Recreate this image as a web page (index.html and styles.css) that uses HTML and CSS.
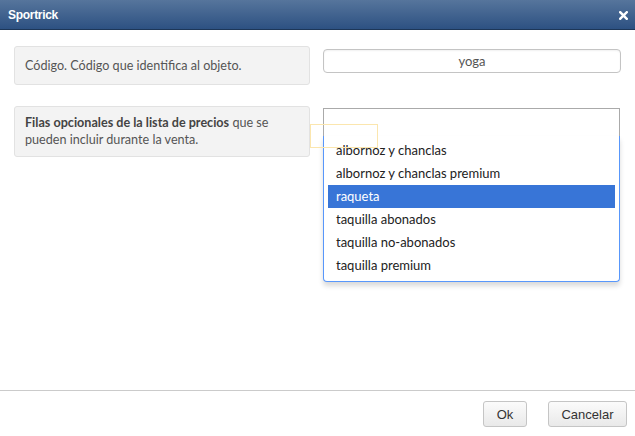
FILE: index.html
```html
<!DOCTYPE html>
<html lang="es">
<head>
<meta charset="utf-8">
<title>Sportrick</title>
<link rel="stylesheet" href="styles.css">
</head>
<body>
<div class="dialog">
  <header class="titlebar">
    <span class="title">Sportrick</span>
    <span class="close" aria-label="cerrar">
      <svg width="9" height="9" viewBox="0 0 9 9"><path d="M1.2 1.2 L7.8 7.8 M7.8 1.2 L1.2 7.8" stroke="#fff" stroke-width="2.4" stroke-linecap="square"/></svg>
    </span>
  </header>
  <main class="content">
    <div class="row">
      <div class="label">Código. Código que identifica al objeto.</div>
      <div class="field">
        <input class="text-input" type="text" value="yoga">
      </div>
    </div>
    <div class="row">
      <div class="label label-tall"><b>Filas opcionales de la lista de precios</b> que se pueden incluir durante la venta.</div>
      <div class="field field-chosen">
        <div class="chosen">
          <div class="choices"></div>
          <div class="search-box"></div>
          <div class="drop">
            <ul class="results">
              <li>albornoz y chanclas</li>
              <li>albornoz y chanclas premium</li>
              <li class="highlighted">raqueta</li>
              <li>taquilla abonados</li>
              <li>taquilla no-abonados</li>
              <li>taquilla premium</li>
            </ul>
          </div>
        </div>
      </div>
    </div>
  </main>
  <footer class="buttons">
    <button class="btn btn-ok">Ok</button>
    <button class="btn btn-cancel">Cancelar</button>
  </footer>
</div>
</body>
</html>
```

FILE: styles.css
```css
* { box-sizing: border-box; }
html, body { margin: 0; padding: 0; background: #fff; }
body { width: 635px; height: 436px; overflow: hidden; }

.dialog {
  display: flex;
  flex-direction: column;
  height: 436px;
  font-family: Lato, "Open Sans", sans-serif;
}

.titlebar {
  height: 30px;
  display: flex;
  align-items: center;
  justify-content: space-between;
  padding: 0 7px 0 8px;
  background: linear-gradient(#56759c, #2d5182);
  border-bottom: 1px solid #1d3657;
  color: #fff;
}
.title {
  font-family: "Liberation Sans", Arial, sans-serif;
  font-weight: bold;
  font-size: 12px;
  letter-spacing: -0.3px;
}
.close { display: flex; width: 9px; height: 9px; margin-top: 1px; }

.content {
  flex: 1;
  padding: 16px 14px 0 14px;
  display: flex;
  flex-direction: column;
  gap: 21px;
}

.row {
  display: flex;
  align-items: flex-start;
  gap: 13px;
}

.label {
  width: 296px;
  flex: none;
  background: #f3f3f3;
  border: 1px solid #e2e2e2;
  border-radius: 3px;
  padding: 10px 10px;
  font-size: 12.6px;
  line-height: 17px;
  color: #555;
  min-height: 39px;
}
.label b { color: #444; }
.label-tall { padding: 7px 10px 8px 10px; line-height: 17px; }

.field { flex: 1; padding-top: 3px; }
.field-chosen { padding-top: 2px; padding-right: 1px; }

.text-input {
  display: block;
  width: 298px;
  height: 24px;
  border: 1px solid #c4c4c4;
  border-radius: 4px;
  box-shadow: inset 0 1px 2px rgba(0,0,0,0.06);
  text-align: center;
  font-family: Lato, "Open Sans", sans-serif;
  font-size: 13px;
  color: #555;
  padding: 0 6px;
  outline: none;
}

.chosen { position: relative; }
.choices {
  height: 29px;
  border: 1px solid #aaa;
  border-bottom: none;
  background: #fff;
}
.search-box {
  position: absolute;
  left: -13px;
  top: 16px;
  width: 68px;
  height: 24px;
  border: 1px solid #fbe6ae;
  pointer-events: none;
  z-index: 2;
}
.drop {
  position: absolute;
  left: 0;
  right: 0;
  top: 28px;
  background: #fff;
  border: 1px solid #5897fb;
  border-top: none;
  border-radius: 0 0 4px 4px;
  box-shadow: 0 4px 5px rgba(0,0,0,0.15);
  z-index: 1;
}
.results {
  list-style: none;
  margin: 0;
  padding: 3px 4px 4px 4px;
}
.results li {
  height: 23px;
  line-height: 23px;
  padding: 0 8px;
  font-size: 13px;
  color: #222;
}
.results li.highlighted {
  background: #3875d7;
  color: #fff;
}

.buttons {
  height: 46px;
  border-top: 1px solid #cbcbcb;
  display: flex;
  justify-content: flex-end;
  align-items: flex-start;
  gap: 21px;
  padding: 10px 8px 0 0;
}
.btn {
  height: 26px;
  border: 1px solid #c5c5c5;
  border-radius: 3px;
  background: linear-gradient(#fbfbfb, #e9e9e9);
  font-family: "Liberation Sans", Arial, sans-serif;
  font-size: 13px;
  color: #333;
  padding: 0;
}
.btn-ok { width: 44px; }
.btn-cancel { width: 79px; }
```
